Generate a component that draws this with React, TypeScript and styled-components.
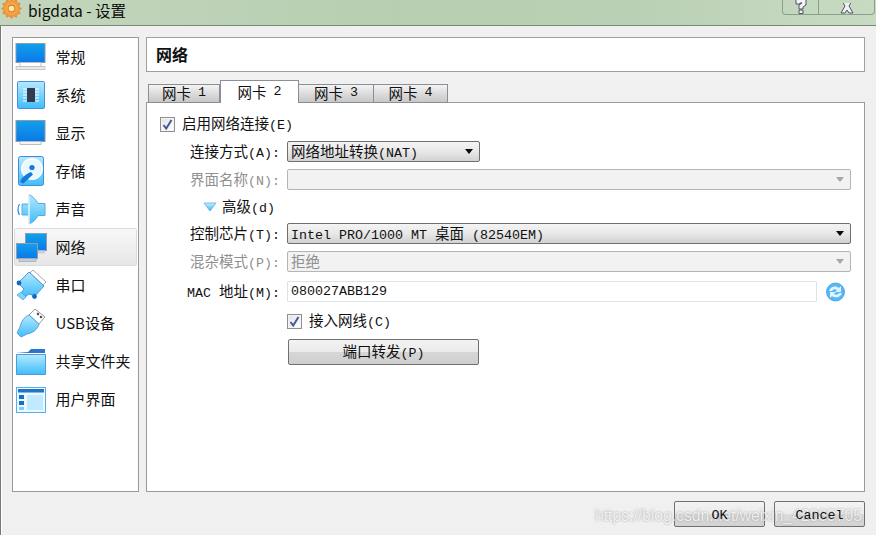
import React from 'react'
import styled, { createGlobalStyle } from 'styled-components'

const CJK = '"Noto Sans CJK SC", "Liberation Sans", sans-serif'
const MONO = '"Liberation Mono", "Noto Sans CJK SC", monospace'

const GlobalStyle = createGlobalStyle`
  html, body { margin: 0; padding: 0; background: #f0f0f0; }
  * { box-sizing: border-box; }
`

const Window = styled.div`
  position: relative;
  width: 876px;
  height: 535px;
  overflow: hidden;
  display: flex;
  flex-direction: column;
  background: #f0f0f0;
  font-family: ${CJK};
  color: #111;
`

const TitleBar = styled.div`
  height: 26px;
  flex: none;
  display: flex;
  align-items: flex-start;
  justify-content: space-between;
  padding-left: 1px;
  background: linear-gradient(90deg, #c3d6bd 0%, #b7ceb0 45%, #bad0b4 72%, #c7dbc3 100%);
  border-bottom: 1px solid #77897a;
`

const TitleLeft = styled.div`
  display: flex;
  align-items: center;
  gap: 6px;
  height: 20px;
  font-size: 15.5px;
  line-height: 20px;
  color: #0c0c0c;
`

const Caption = styled.div`
  display: flex;
  height: 15px;
  margin-right: 1px;
  border: 1px solid #8ba08c;
  border-top: none;
  border-radius: 0 0 4px 4px;
`

const CaptionButton = styled.div<{ $w: number }>`
  width: ${p => p.$w}px;
  height: 14px;
  overflow: hidden;
  display: flex;
  align-items: flex-end;
  justify-content: center;
  & + & { border-left: 1px solid #8ba08c; }
`

const Body = styled.div`
  flex: 1;
  display: flex;
  flex-direction: column;
  padding: 11px 11px 8px 12px;
  border-left: 1px solid #6f7a70;
  background: #f0f0f0;
  box-shadow: inset 1px 0 0 #fff;
`

const Main = styled.div`
  height: 455px;
  display: flex;
  gap: 7px;
  margin-left: -1px;
`

const Sidebar = styled.div`
  width: 127px;
  flex: none;
  background: #fff;
  border: 1px solid #9a9a9a;
  display: flex;
  flex-direction: column;
  padding: 0 1px;
`

const NavItem = styled.div<{ $active?: boolean }>`
  height: 38px;
  flex: none;
  display: flex;
  align-items: center;
  gap: 8.5px;
  padding-left: 1px;
  font-size: 15px;
  color: #101010;
  ${p => p.$active && `
    border: 1px solid #dcdcdc;
    border-radius: 2px;
    padding-left: 0;
    background: linear-gradient(180deg, #f8f8f8 0%, #e6e6e6 100%);
  `}
`

const NavText = styled.span`
  padding-bottom: 2px;
`

const Content = styled.div`
  flex: 1;
  min-width: 0;
  display: flex;
  flex-direction: column;
`

const Header = styled.div`
  height: 35px;
  flex: none;
  background: #fff;
  border: 1px solid #a0a0a0;
  padding-left: 9px;
  font-size: 16px;
  font-weight: 700;
  line-height: 32px;
  color: #111;
`

const TabBar = styled.div`
  height: 23px;
  margin-top: 8px;
  display: flex;
  align-items: flex-end;
  padding-left: 2px;
  position: relative;
  z-index: 1;
  margin-bottom: -1px;
`

const Tab = styled.div<{ $active?: boolean; $w: number }>`
  width: ${p => p.$w}px;
  height: ${p => (p.$active ? 23 : 19)}px;
  flex: none;
  display: flex;
  align-items: center;
  justify-content: center;
  gap: 7px;
  padding-bottom: ${p => (p.$active ? 2 : 3)}px;
  font-size: 14.5px;
  border: 1px solid #8b8d98;
  border-left-width: ${p => (p.$active ? 1 : 0)}px;
  background: ${p => (p.$active ? '#fff' : 'linear-gradient(180deg, #f4f4f4 0%, #dcdcdc 50%, #c8c8c8 100%)')};
  border-bottom: ${p => (p.$active ? 'none' : '1px solid #8b8d98')};
  &:first-child { border-left-width: 1px; }
`

const Panel = styled.div`
  flex: 1;
  background: #fff;
  border: 1px solid #9a9a9a;
  padding: 11px 13px 0 13px;
  display: flex;
  flex-direction: column;
  gap: 7px;
`

const Latin = styled.span`
  font-family: ${MONO};
  font-size: 13.33px;
`

const CheckRow = styled.div<{ $indent?: number }>`
  height: 20px;
  flex: none;
  display: flex;
  align-items: center;
  gap: 7px;
  font-size: 14.5px;
  margin-left: ${p => p.$indent ?? 0}px;
`

const FieldText = styled.span`
  padding-bottom: 3px;
  white-space: pre;
`

const CheckBox = styled.span`
  width: 15px;
  height: 15px;
  flex: none;
  display: flex;
  align-items: center;
  justify-content: center;
  border: 1px solid #8e8f8f;
  background: linear-gradient(135deg, #e0e0e0 0%, #f6f6f6 60%, #fff 100%);
  box-shadow: inset 0 0 0 1px #f4f4f4;
`

const Row = styled.div<{ $h?: number }>`
  height: ${p => p.$h ?? 21}px;
  flex: none;
  display: flex;
  align-items: center;
`

const Label = styled.div<{ $dim?: boolean }>`
  width: 127px;
  flex: none;
  text-align: right;
  padding: 0 7px 3px 0;
  font-size: 14.5px;
  white-space: pre;
  color: ${p => (p.$dim ? '#8f8f8f' : '#111')};
`

const Combo = styled.div<{ $w?: number; $dim?: boolean }>`
  ${p => (p.$w ? `width: ${p.$w}px;` : 'flex: 1;')}
  height: 21px;
  display: flex;
  align-items: center;
  justify-content: space-between;
  padding: 0 6px 0 3px;
  border: 1px solid ${p => (p.$dim ? '#b4b4b4' : '#6f6f6f')};
  border-radius: 2px;
  font-size: 14.5px;
  color: ${p => (p.$dim ? '#8f8f8f' : '#111')};
  background: ${p => (p.$dim ? '#f2f2f2' : 'linear-gradient(180deg, #f4f4f4 0%, #e8e8e8 50%, #d2d2d2 100%)')};
`

const Arrow = styled.span<{ $dim?: boolean }>`
  width: 0;
  height: 0;
  border-left: 4px solid transparent;
  border-right: 4px solid transparent;
  border-top: 5px solid ${p => (p.$dim ? '#a6a6a6' : '#0a0a0a')};
`

const MacInput = styled.div`
  width: 530px;
  height: 21px;
  flex: none;
  display: flex;
  align-items: center;
  padding-left: 3px;
  border: 1px solid #dde3e9;
  border-radius: 1px;
  background: #fff;
`

const RefreshSlot = styled.span`
  margin-left: 9px;
  display: flex;
`

const Advanced = styled.div`
  height: 19px;
  flex: none;
  display: flex;
  align-items: center;
  gap: 5px;
  margin-left: 43px;
  font-size: 14.5px;
`

const ForwardButton = styled.div`
  width: 191px;
  height: 26px;
  flex: none;
  margin: 1px 0 0 128px;
  display: flex;
  align-items: center;
  justify-content: center;
  font-size: 14.5px;
  border: 1px solid #707070;
  border-radius: 2px;
  background: linear-gradient(180deg, #f3f3f3 0%, #ebebeb 48%, #d6d6d6 52%, #cfcfcf 100%);
`

const Footer = styled.div`
  flex: 1;
  display: flex;
  justify-content: flex-end;
  align-items: flex-start;
  gap: 9px;
  padding-top: 9px;
`

const DialogButton = styled.div`
  width: 91px;
  height: 26px;
  display: flex;
  align-items: center;
  justify-content: center;
  padding-top: 2px;
  border: 1px solid #707070;
  border-radius: 2px;
  background: linear-gradient(180deg, #f3f3f3 0%, #ebebeb 48%, #dcdcdc 52%, #d2d2d2 100%);
`

const DialogLabel = styled(Latin)`
  position: relative;
  z-index: 2;
`

const Watermark = styled.div`
  position: absolute;
  z-index: 1;
  left: 595px;
  top: 507px;
  font-family: "Liberation Sans", sans-serif;
  font-size: 15.7px;
  line-height: 18px;
  white-space: nowrap;
  color: rgba(255, 255, 255, 0.78);
  text-shadow: 0 0 2px rgba(120, 120, 120, 0.7);
`

const Sun = () => (
  <svg width="21" height="21" viewBox="0 0 20 20" style={{ marginTop: -4 }}>
    <defs>
      <radialGradient id="sun" cx="50%" cy="50%" r="55%">
        <stop offset="0" stopColor="#ffc65c" />
        <stop offset="1" stopColor="#e57f2c" />
      </radialGradient>
    </defs>
    <path
      d="M10 0l2 2.500 3-1.300.6 3.200 3.200.6-1.300 3 2.500 2-2.500 2 1.300 3-3.200.6-.6 3.200-3-1.300-2 2.500-2-2.500-3 1.300-.6-3.200-3.200-.6 1.300-3L0 10l2.500-2-1.300-3 3.200-.6.6-3.200 3 1.300z"
      fill="url(#sun)"
    />
    <circle cx="10" cy="10" r="3.200" fill="#fbe6a6" stroke="#d97f2c" />
  </svg>
)

const IconSvg = styled.svg`
  width: 32px;
  height: 32px;
  flex: none;
`

const Grads = ({ id }: { id: string }) => (
  <defs>
    <linearGradient id={`${id}s`} x1="0" y1="0" x2="0" y2="1">
      <stop offset="0" stopColor="#12a0ea" />
      <stop offset="1" stopColor="#0a78e8" />
    </linearGradient>
    <linearGradient id={`${id}l`} x1="0" y1="0" x2="0" y2="1">
      <stop offset="0" stopColor="#b4eafd" />
      <stop offset="1" stopColor="#40bcfa" />
    </linearGradient>
  </defs>
)

const Monitor = ({ id }: { id: string }) => (
  <IconSvg viewBox="0 0 32 32">
    <Grads id={id} />
    <rect x="1" y="2.500" width="29" height="19" fill={`url(#${id}s)`} stroke="#8d9aa8" />
    <path d="M5 21.500h21v4H5z" fill="#fff" stroke="#c0c0c0" />
    <path d="M1 25.500h29v3H1z" fill="#e9e9e9" stroke="#bdbdbd" strokeWidth="0.8" />
  </IconSvg>
)

const DisplayIcon = () => (
  <IconSvg viewBox="0 0 32 32">
    <Grads id="d" />
    <rect x="1" y="3.500" width="29" height="21" fill="url(#ds)" stroke="#8d9aa8" />
    <path d="M5 24.500h21v3H5z" fill="#f4f4f4" stroke="#bdbdbd" />
  </IconSvg>
)

const SystemIcon = () => (
  <IconSvg viewBox="0 0 32 32">
    <Grads id="y" />
    <rect x="2.500" y="2.500" width="27" height="27" rx="1" fill="url(#yl)" stroke="#4a8fd8" />
    <path d="M8 10h16M8 13h16M8 16h16M8 19h16M8 22h16" stroke="#fff" strokeWidth="1.200" />
    <rect x="12" y="9" width="8" height="14" fill="#333c4e" />
  </IconSvg>
)

const StorageIcon = () => (
  <IconSvg viewBox="0 0 32 32">
    <Grads id="t" />
    <rect x="3.500" y="1.500" width="25" height="29" rx="2" fill="url(#tl)" stroke="#3f8edb" />
    <circle cx="17" cy="14" r="11" fill="#fff" />
    <circle cx="17" cy="14" r="9.500" fill="#e8f8ff" />
    <circle cx="17" cy="12.500" r="2.600" fill="#1877d8" />
    <path d="M5 27c2-5 6-8 11-10l2 2.500C14 23 11 26 8.500 28.500z" fill="#1877d8" />
  </IconSvg>
)

const SoundIcon = () => (
  <IconSvg viewBox="0 0 32 32">
    <Grads id="o" />
    <path d="M7 11h7V1.500c4 2 7 5.500 9 9h7v12h-7c-2 4-5 7-9 8.500V22H7z" fill="url(#ol)" stroke="#5aa9e6" />
    <path d="M14 1.500V31" stroke="#e2f7ff" strokeWidth="1.500" />
    <path d="M4.500 11C2.500 14 2.500 19 4.500 22" fill="none" stroke="#2a86dc" strokeWidth="1.200" />
  </IconSvg>
)

const NetworkIcon = () => (
  <IconSvg viewBox="0 0 32 32">
    <Grads id="n" />
    <rect x="10.500" y="2.500" width="21" height="17" fill="url(#ns)" stroke="#8aa0b4" />
    <path d="M20 19.500h10v3H20z" fill="#c9d1d8" />
    <rect x="1.500" y="12.500" width="21" height="15" fill="url(#ns)" stroke="#8aa0b4" />
    <path d="M4 27.500h17v3H4z" fill="#c4ccd4" stroke="#9da7b0" strokeWidth="0.7" />
  </IconSvg>
)

const SerialIcon = () => (
  <IconSvg viewBox="0 0 32 32">
    <Grads id="e" />
    <path d="M18 1l13 12-3 3L15 4z" fill="#fff" stroke="#a9a9a9" />
    <path d="M14 3l15 14-9 10-6-2-4 3-4-4 3-4-6-6z" fill="url(#el)" stroke="#4a9be0" />
    <path d="M6 23l5 5-3 3-6-5z" fill="#7fd4fb" stroke="#4a9be0" strokeWidth="0.7" />
    <circle cx="4" cy="14" r="2.400" fill="#1468c8" />
    <circle cx="19.500" cy="27.500" r="2.400" fill="#1468c8" />
  </IconSvg>
)

const UsbIcon = () => (
  <IconSvg viewBox="0 0 32 32">
    <Grads id="u" />
    <path d="M20 2l10 8-6 7-10-9z" fill="#fff" stroke="#9a9a9a" />
    <rect x="22" y="6" width="2" height="2" fill="#333" transform="rotate(40 23 7)" />
    <rect x="25" y="9" width="2" height="2" fill="#333" transform="rotate(40 26 10)" />
    <path d="M14 8l10 9c-1 5-6 9-12 10l-6 3-4-4 3-6C6 15 9 10 14 8z" fill="url(#ul)" stroke="#52a3e4" />
  </IconSvg>
)

const FolderIcon = () => (
  <IconSvg viewBox="0 0 32 32">
    <Grads id="f" />
    <path d="M1 8l12-1 3-3h14v4z" fill="#2f74c8" />
    <path d="M1.500 9.500h29v20h-29z" fill="url(#fl)" stroke="#4a9ce2" />
  </IconSvg>
)

const UiIcon = () => (
  <IconSvg viewBox="0 0 32 32">
    <Grads id="i" />
    <rect x="1.500" y="4.500" width="29" height="25" fill="#eaf9ff" stroke="#58aee8" />
    <rect x="3" y="6" width="26" height="3.500" fill="#1f74c4" />
    <rect x="4" y="12" width="5" height="4" fill="#1570c6" />
    <rect x="4" y="18" width="5" height="4" fill="#1570c6" />
    <rect x="4" y="24" width="5" height="3" fill="#7fcdf6" />
    <rect x="12" y="12" width="16" height="15" fill="#bfeaff" />
  </IconSvg>
)

const Check = () => (
  <svg width="11" height="11" viewBox="0 0 11 11">
    <path d="M1.500 6l2.700 3.500L9.500 1" fill="none" stroke="#44589c" strokeWidth="2" />
  </svg>
)

const Triangle = () => (
  <svg width="14" height="10" viewBox="0 0 14 10">
    <defs>
      <linearGradient id="tri" x1="0" y1="0" x2="0" y2="1">
        <stop offset="0" stopColor="#c8f0ff" />
        <stop offset="1" stopColor="#3fb2f0" />
      </linearGradient>
    </defs>
    <path d="M1 1h12L7 9z" fill="url(#tri)" stroke="#56b0e6" strokeWidth="0.8" />
  </svg>
)

const Refresh = () => (
  <svg width="19" height="20" viewBox="0 0 19 20">
    <circle cx="9.500" cy="10" r="9" fill="#55b8f4" stroke="#3a98e0" strokeWidth="0.8" />
    <path d="M3 9c1-4 6-6 10-3l2-2v6H9l2-2c-2-1.500-4-.5-5 1z" fill="#dff4ff" />
    <path d="M16 11c-1 4-6 6-10 3l-2 2v-6h6l-2 2c2 1.500 4 .5 5-1z" fill="#dff4ff" />
  </svg>
)

const navItems: [string, React.ReactNode][] = [
  ['常规', <Monitor id="g" />],
  ['系统', <SystemIcon />],
  ['显示', <DisplayIcon />],
  ['存储', <StorageIcon />],
  ['声音', <SoundIcon />],
  ['网络', <NetworkIcon />],
  ['串口', <SerialIcon />],
  ['USB设备', <UsbIcon />],
  ['共享文件夹', <FolderIcon />],
  ['用户界面', <UiIcon />],
]

const tabs: [string, number][] = [['1', 72], ['2', 79], ['3', 75], ['4', 74]]

export default function App() {
  return (
    <Window>
      <GlobalStyle />
      <TitleBar>
        <TitleLeft>
          <Sun />
          <span>bigdata - 设置</span>
        </TitleLeft>
        <Caption>
          <CaptionButton $w={35}>
            <svg width="14" height="14" viewBox="0 0 14 14">
              <path d="M2 -3h10v8l-3 2v2H5V5l3-2H6v1H2zM5 10h4v3.500H5z" fill="#f2f2f4" stroke="#4f5560" />
            </svg>
          </CaptionButton>
          <CaptionButton $w={56}>
            <svg width="16" height="11" viewBox="0 0 16 11">
              <path d="M2 -4h4l2 3 2-3h4l-4 7 4 7h-4L8 7l-2 3H2l4-7z" fill="#f2f2f4" stroke="#4f5560" />
            </svg>
          </CaptionButton>
        </Caption>
      </TitleBar>
      <Body>
        <Main>
          <Sidebar>
            {navItems.map(([name, icon]) => (
              <NavItem key={name} $active={name === '网络'}>
                {icon}
                <NavText>{name}</NavText>
              </NavItem>
            ))}
          </Sidebar>
          <Content>
            <Header>网络</Header>
            <TabBar>
              {tabs.map(([n, w]) => (
                <Tab key={n} $w={w} $active={n === '2'}>
                  <span>网卡</span>
                  <Latin>{n}</Latin>
                </Tab>
              ))}
            </TabBar>
            <Panel>
              <CheckRow>
                <CheckBox><Check /></CheckBox>
                <FieldText>启用网络连接<Latin>(E)</Latin></FieldText>
              </CheckRow>
              <Row>
                <Label>连接方式<Latin>(A):</Latin></Label>
                <Combo $w={193}>
                  <FieldText>网络地址转换<Latin>(NAT)</Latin></FieldText>
                  <Arrow />
                </Combo>
              </Row>
              <Row>
                <Label $dim>界面名称<Latin>(N):</Latin></Label>
                <Combo $dim>
                  <span />
                  <Arrow $dim />
                </Combo>
              </Row>
              <Advanced>
                <Triangle />
                <FieldText>高级<Latin>(d)</Latin></FieldText>
              </Advanced>
              <Row>
                <Label>控制芯片<Latin>(T):</Latin></Label>
                <Combo>
                  <FieldText><Latin>Intel PRO/1000 MT </Latin>桌面<Latin> (82540EM)</Latin></FieldText>
                  <Arrow />
                </Combo>
              </Row>
              <Row>
                <Label $dim>混杂模式<Latin>(P):</Latin></Label>
                <Combo $dim>
                  <FieldText>拒绝</FieldText>
                  <Arrow $dim />
                </Combo>
              </Row>
              <Row $h={25}>
                <Label><Latin>MAC </Latin>地址<Latin>(M):</Latin></Label>
                <MacInput><Latin>080027ABB129</Latin></MacInput>
                <RefreshSlot><Refresh /></RefreshSlot>
              </Row>
              <CheckRow $indent={127}>
                <CheckBox><Check /></CheckBox>
                <FieldText>接入网线<Latin>(C)</Latin></FieldText>
              </CheckRow>
              <ForwardButton>
                <FieldText>端口转发<Latin>(P)</Latin></FieldText>
              </ForwardButton>
            </Panel>
          </Content>
        </Main>
        <Footer>
          <DialogButton><DialogLabel>OK</DialogLabel></DialogButton>
          <DialogButton><DialogLabel>Cancel</DialogLabel></DialogButton>
        </Footer>
      </Body>
      <Watermark>https://blog.csdn.net/weixin_42089705</Watermark>
    </Window>
  )
}
